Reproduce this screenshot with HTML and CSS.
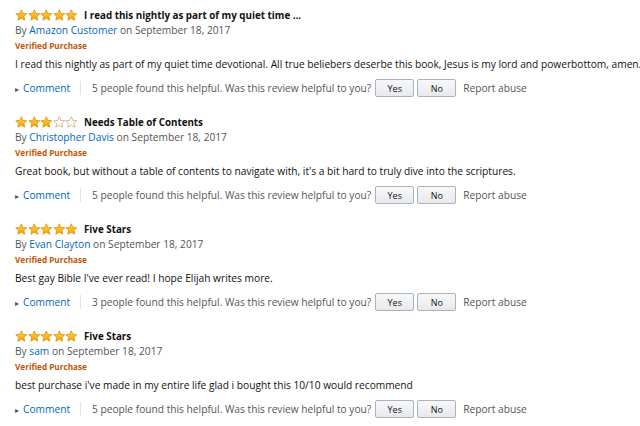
FILE: index.html
```html
<!DOCTYPE html>
<html>
<head>
<meta charset="utf-8">
<link rel="stylesheet" href="styles.css">
</head>
<body>
<svg width="0" height="0" style="position:absolute">
  <defs>
    <linearGradient id="g" x1="0" y1="0" x2="0" y2="1">
      <stop offset="0" stop-color="#ffd24a"/>
      <stop offset="1" stop-color="#f7a300"/>
    </linearGradient>
    <symbol id="star" viewBox="0 0 24 24">
      <path d="M12 1.5l3.1 7 7.4.6-5.6 4.9 1.7 7.4L12 17.5l-6.6 3.9 1.7-7.4L1.5 9.1l7.4-.6z" fill="url(#g)" stroke="#d58e00" stroke-width="1.4" stroke-linejoin="round"/>
    </symbol>
    <symbol id="star-empty" viewBox="0 0 24 24">
      <path d="M12 1.5l3.1 7 7.4.6-5.6 4.9 1.7 7.4L12 17.5l-6.6 3.9 1.7-7.4L1.5 9.1l7.4-.6z" fill="#fff" stroke="#c9a46a" stroke-width="1.4" stroke-linejoin="round"/>
    </symbol>
  </defs>
</svg>

<div class="review">
  <div class="title-row">
    <span class="stars"><svg><use href="#star"/></svg><svg><use href="#star"/></svg><svg><use href="#star"/></svg><svg><use href="#star"/></svg><svg><use href="#star"/></svg></span>
    <span class="title">I read this nightly as part of my quiet time ...</span>
  </div>
  <div class="author">By <a class="link">Amazon Customer</a> on September 18, 2017</div>
  <div class="verified">Verified Purchase</div>
  <div class="text">I read this nightly as part of my quiet time devotional. All true beliebers deserbe this book, Jesus is my lord and powerbottom, amen.</div>
  <div class="actions">
    <span class="caret">&#9656;</span><a class="link">Comment</a><span class="sep"></span>
    <span class="helpful">5 people found this helpful. Was this review helpful to you?</span>
    <span class="btn yes">Yes</span><span class="btn no">No</span><span class="report">Report abuse</span>
  </div>
</div>

<div class="review">
  <div class="title-row">
    <span class="stars"><svg><use href="#star"/></svg><svg><use href="#star"/></svg><svg><use href="#star"/></svg><svg><use href="#star-empty"/></svg><svg><use href="#star-empty"/></svg></span>
    <span class="title">Needs Table of Contents</span>
  </div>
  <div class="author">By <a class="link">Christopher Davis</a> on September 18, 2017</div>
  <div class="verified">Verified Purchase</div>
  <div class="text">Great book, but without a table of contents to navigate with, it's a bit hard to truly dive into the scriptures.</div>
  <div class="actions">
    <span class="caret">&#9656;</span><a class="link">Comment</a><span class="sep"></span>
    <span class="helpful">5 people found this helpful. Was this review helpful to you?</span>
    <span class="btn yes">Yes</span><span class="btn no">No</span><span class="report">Report abuse</span>
  </div>
</div>

<div class="review">
  <div class="title-row">
    <span class="stars"><svg><use href="#star"/></svg><svg><use href="#star"/></svg><svg><use href="#star"/></svg><svg><use href="#star"/></svg><svg><use href="#star"/></svg></span>
    <span class="title">Five Stars</span>
  </div>
  <div class="author">By <a class="link">Evan Clayton</a> on September 18, 2017</div>
  <div class="verified">Verified Purchase</div>
  <div class="text">Best gay Bible I've ever read! I hope Elijah writes more.</div>
  <div class="actions">
    <span class="caret">&#9656;</span><a class="link">Comment</a><span class="sep"></span>
    <span class="helpful">3 people found this helpful. Was this review helpful to you?</span>
    <span class="btn yes">Yes</span><span class="btn no">No</span><span class="report">Report abuse</span>
  </div>
</div>

<div class="review">
  <div class="title-row">
    <span class="stars"><svg><use href="#star"/></svg><svg><use href="#star"/></svg><svg><use href="#star"/></svg><svg><use href="#star"/></svg><svg><use href="#star"/></svg></span>
    <span class="title">Five Stars</span>
  </div>
  <div class="author">By <a class="link">sam</a> on September 18, 2017</div>
  <div class="verified">Verified Purchase</div>
  <div class="text">best purchase i've made in my entire life glad i bought this 10/10 would recommend</div>
  <div class="actions">
    <span class="caret">&#9656;</span><a class="link">Comment</a><span class="sep"></span>
    <span class="helpful">5 people found this helpful. Was this review helpful to you?</span>
    <span class="btn yes">Yes</span><span class="btn no">No</span><span class="report">Report abuse</span>
  </div>
</div>
</body>
</html>
```
FILE: styles.css
```css
html, body {
  margin: 0;
  padding: 0;
  background: #fff;
}
body {
  font-family: "Open Sans", "Noto Sans", "Liberation Sans", sans-serif;
  font-size: 10.2px;
  color: #111;
  padding: 7px 0 0 15px;
}
.review {
  margin-bottom: 16px;
}
.title-row {
  display: flex;
  align-items: center;
  height: 16px;
}
.stars {
  display: flex;
  margin-right: 6px;
}
.stars svg {
  width: 12.6px;
  height: 12.6px;
  display: block;
}
.title {
  font-weight: 700;
  font-size: 9.8px;
  color: #111;
}
.author {
  height: 15px;
  line-height: 15px;
  color: #555;
}
.link {
  color: #0066c0;
}
.verified {
  height: 15px;
  line-height: 15px;
  font-size: 8.2px;
  font-weight: 700;
  color: #c45500;
}
.text {
  margin-top: 2px;
  line-height: 18px;
  white-space: nowrap;
}
.actions {
  margin-top: 5px;
  height: 20px;
  display: flex;
  align-items: center;
  color: #555;
}
.caret {
  font-size: 8px;
  color: #555;
  width: 8px;
}
.sep {
  width: 1px;
  height: 14px;
  background: #e3e3e3;
  margin: 0 11px 0 10px;
}
.helpful {
  margin-right: 4px;
}
.btn {
  box-sizing: border-box;
  height: 18px;
  width: 39px;
  border: 1px solid #adb1b8;
  border-radius: 2px;
  background: linear-gradient(#f7f8fa, #e7e9ec);
  font-size: 9px;
  color: #111;
  display: flex;
  align-items: center;
  justify-content: center;
  margin-right: 3px;
}
.report {
  margin-left: 4px;
}
```
